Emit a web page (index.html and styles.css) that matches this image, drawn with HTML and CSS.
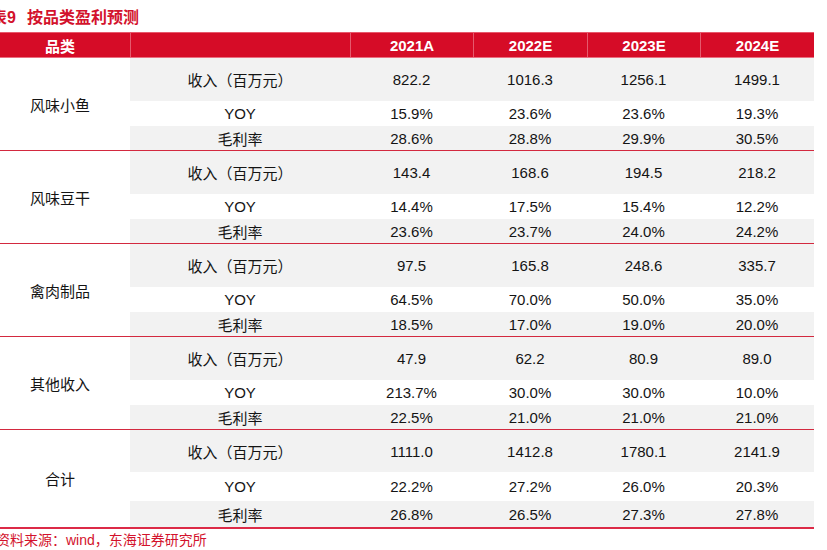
FILE: index.html
```html
<!DOCTYPE html>
<html lang="zh">
<head>
<meta charset="utf-8">
<link rel="stylesheet" href="styles.css">
</head>
<body>
<div class="title"><span class="num">表9</span><span class="name">按品类盈利预测</span></div>
<div class="table">
  <div class="head">
    <div class="hc">品类</div>
    <div class="hc"></div>
    <div class="hc">2021A</div>
    <div class="hc">2022E</div>
    <div class="hc">2023E</div>
    <div class="hc">2024E</div>
  </div>

  <div class="group">
    <div class="cat">风味小鱼</div>
    <div class="c g">收入（百万元）</div><div class="c g">822.2</div><div class="c g">1016.3</div><div class="c g">1256.1</div><div class="c g">1499.1</div>
    <div class="c">YOY</div><div class="c">15.9%</div><div class="c">23.6%</div><div class="c">23.6%</div><div class="c">19.3%</div>
    <div class="c g">毛利率</div><div class="c g">28.6%</div><div class="c g">28.8%</div><div class="c g">29.9%</div><div class="c g">30.5%</div>
  </div>

  <div class="group">
    <div class="cat">风味豆干</div>
    <div class="c g">收入（百万元）</div><div class="c g">143.4</div><div class="c g">168.6</div><div class="c g">194.5</div><div class="c g">218.2</div>
    <div class="c">YOY</div><div class="c">14.4%</div><div class="c">17.5%</div><div class="c">15.4%</div><div class="c">12.2%</div>
    <div class="c g">毛利率</div><div class="c g">23.6%</div><div class="c g">23.7%</div><div class="c g">24.0%</div><div class="c g">24.2%</div>
  </div>

  <div class="group">
    <div class="cat">禽肉制品</div>
    <div class="c g">收入（百万元）</div><div class="c g">97.5</div><div class="c g">165.8</div><div class="c g">248.6</div><div class="c g">335.7</div>
    <div class="c">YOY</div><div class="c">64.5%</div><div class="c">70.0%</div><div class="c">50.0%</div><div class="c">35.0%</div>
    <div class="c g">毛利率</div><div class="c g">18.5%</div><div class="c g">17.0%</div><div class="c g">19.0%</div><div class="c g">20.0%</div>
  </div>

  <div class="group">
    <div class="cat">其他收入</div>
    <div class="c g">收入（百万元）</div><div class="c g">47.9</div><div class="c g">62.2</div><div class="c g">80.9</div><div class="c g">89.0</div>
    <div class="c">YOY</div><div class="c">213.7%</div><div class="c">30.0%</div><div class="c">30.0%</div><div class="c">10.0%</div>
    <div class="c g">毛利率</div><div class="c g">22.5%</div><div class="c g">21.0%</div><div class="c g">21.0%</div><div class="c g">21.0%</div>
  </div>

  <div class="group last">
    <div class="cat">合计</div>
    <div class="c g">收入（百万元）</div><div class="c g">1111.0</div><div class="c g">1412.8</div><div class="c g">1780.1</div><div class="c g">2141.9</div>
    <div class="c">YOY</div><div class="c">22.2%</div><div class="c">27.2%</div><div class="c">26.0%</div><div class="c">20.3%</div>
    <div class="c g">毛利率</div><div class="c g">26.8%</div><div class="c g">26.5%</div><div class="c g">27.3%</div><div class="c g">27.8%</div>
  </div>
</div>
<div class="source">资料来源：wind，东海证券研究所</div>
</body>
</html>
```

FILE: styles.css
```css
html, body {
  margin: 0;
  padding: 0;
  background: #ffffff;
}

body {
  font-family: "Liberation Sans", "Noto Sans CJK SC", sans-serif;
  color: #141414;
  overflow: hidden;
}

.title {
  height: 32px;
  box-sizing: border-box;
  padding-top: 5px;
  line-height: 26px;
  margin-left: -9px;
  font-size: 16px;
  font-weight: bold;
  color: #d3122c;
  white-space: nowrap;
}

.title .num {
  margin-right: 11px;
}

.table {
  margin-left: -10px;
  width: 824px;
}

.head,
.group {
  display: grid;
  grid-template-columns: 140px 220px 123px 114px 113px 114px;
}

.head {
  height: 26px;
  box-sizing: border-box;
  background: #d60c27;
  border-top: 1px solid #e8586b;
  border-bottom: 1px solid #ea6f80;
}

.hc {
  display: flex;
  align-items: center;
  justify-content: center;
  color: #ffffff;
  font-weight: bold;
  font-size: 15px;
  border-left: 1px solid #e55a6d;
}

.hc:first-child {
  border-left: none;
}

.group {
  grid-template-rows: 43px 25px 24px;
  border-bottom: 1px solid #d3293f;
}

.group.last {
  grid-template-rows: 42px 29px 26px;
  border-bottom: 2px solid #dc2a47;
}

.cat {
  grid-row: 1 / 4;
  display: flex;
  align-items: center;
  justify-content: center;
  font-size: 15px;
  background: #ffffff;
}

.c {
  display: flex;
  align-items: center;
  justify-content: center;
  font-size: 15px;
  white-space: nowrap;
}

.c.g {
  background: #f2f2f2;
}

.source {
  margin-left: -4px;
  line-height: 22px;
  font-size: 14px;
  color: #d3122c;
  white-space: nowrap;
}
```
